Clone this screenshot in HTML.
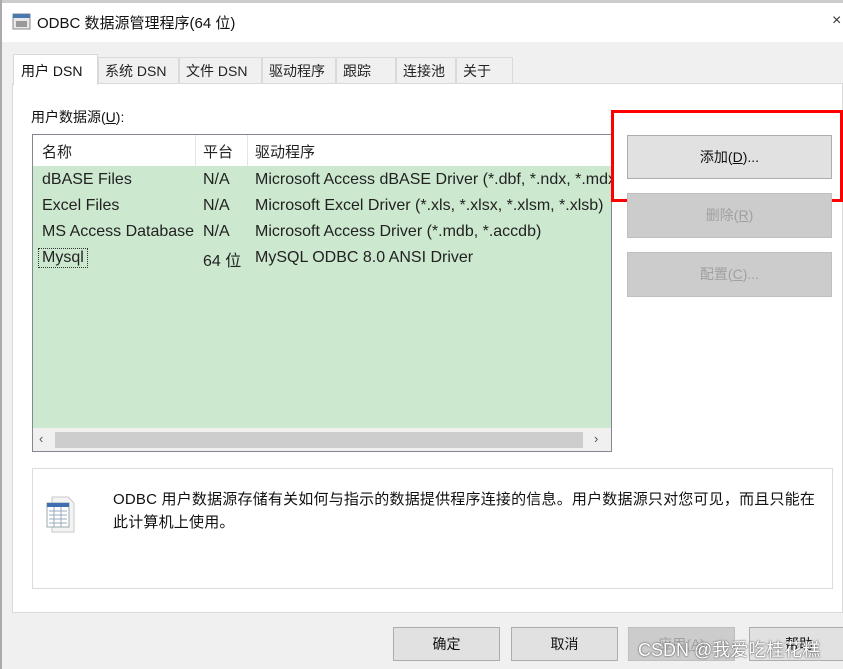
<!DOCTYPE html>
<html><head><meta charset="utf-8"><style>
*{box-sizing:border-box;margin:0;padding:0}
body{width:843px;height:669px;overflow:hidden;background:#f0f0f0;font-family:"Liberation Sans","Noto Sans CJK SC",sans-serif;font-size:14px;color:#111;position:relative}
.a{position:absolute}
.tab{position:absolute;top:57px;height:27px;background:#f0f0f0;border:1px solid #dadada;border-bottom:none;font-size:14px;line-height:26px;padding-left:6px;color:#222}
.btn{position:absolute;background:#e1e1e1;border:1px solid #adadad;text-align:center;font-size:14px}
.dis{background:#cccccc;border-color:#bfbfbf;color:#a0a0a0}
.row{position:absolute;left:9px;font-size:16px;color:#222;white-space:nowrap}
</style></head><body>
<div class="a" style="left:0;top:0;width:843px;height:42px;background:#fff"></div>
<div class="a" style="left:0;top:0;width:843px;height:3px;background:#ccc"></div>
<div class="a" style="left:0;top:0;width:2px;height:669px;background:#aaa"></div>
<svg class="a" style="left:12px;top:13px" width="20" height="18"><rect x="1" y="1" width="17" height="15" fill="#e8e8e8" stroke="#888"/><rect x="1" y="1" width="17" height="4" fill="#4a78b0"/><rect x="4" y="8" width="11" height="6" fill="#999"/></svg>
<div class="a" style="left:37px;top:12px;font-size:15px">ODBC 数据源管理程序(64 位)</div>
<div class="a" style="left:832px;top:12px;font-size:16px;color:#333">×</div>
<div class="tab" style="left:98px;width:81px">系统 DSN</div>
<div class="tab" style="left:179px;width:83px">文件 DSN</div>
<div class="tab" style="left:262px;width:74px">驱动程序</div>
<div class="tab" style="left:336px;width:60px">跟踪</div>
<div class="tab" style="left:396px;width:60px">连接池</div>
<div class="tab" style="left:456px;width:57px">关于</div>
<div class="a" style="left:12px;top:83px;width:831px;height:530px;background:#fff;border:1px solid #d9d9d9"></div>
<div class="a" style="left:13px;top:54px;width:85px;height:31px;background:#fff;border:1px solid #d9d9d9;border-bottom:none;padding:6px 0 0 7px;font-size:14px">用户 DSN</div>
<div class="a" style="left:31px;top:107px;font-size:14px">用户数据源(<u>U</u>):</div>
<div class="a" style="left:32px;top:134px;width:580px;height:318px;border:1px solid #828790;background:#cce8cf;overflow:hidden">
 <div class="a" style="left:0;top:0;width:580px;height:31px;background:#fff"></div>
 <div class="a" style="left:162px;top:0;width:1px;height:31px;background:#e5e5e5"></div>
 <div class="a" style="left:214px;top:0;width:1px;height:31px;background:#e5e5e5"></div>
 <div class="row" style="top:6px;font-size:15px">名称</div><div class="row" style="left:170px;top:6px;font-size:15px">平台</div><div class="row" style="left:222px;top:6px;font-size:15px">驱动程序</div>
 <div class="row" style="top:36px">dBASE Files</div><div class="row" style="left:170px;top:36px">N/A</div><div class="row" style="left:222px;top:36px">Microsoft Access dBASE Driver (*.dbf, *.ndx, *.mdx)</div>
 <div class="row" style="top:62px">Excel Files</div><div class="row" style="left:170px;top:62px">N/A</div><div class="row" style="left:222px;top:62px">Microsoft Excel Driver (*.xls, *.xlsx, *.xlsm, *.xlsb)</div>
 <div class="row" style="top:88px">MS Access Database</div><div class="row" style="left:170px;top:88px">N/A</div><div class="row" style="left:222px;top:88px">Microsoft Access Driver (*.mdb, *.accdb)</div>
 <div class="row" style="top:113px;left:5px;border:1px dotted #333;padding:0 3px">Mysql</div><div class="row" style="left:170px;top:112px">64 位</div><div class="row" style="left:222px;top:114px">MySQL ODBC 8.0 ANSI Driver</div>
 <div class="a" style="left:0;top:293px;width:580px;height:24px;background:#f0f0f0"></div>
 <div class="a" style="left:22px;top:297px;width:528px;height:16px;background:#cdcdcd"></div>
 <div class="a" style="left:6px;top:296px;font-size:13px;color:#555">‹</div>
 <div class="a" style="left:561px;top:296px;font-size:13px;color:#555">›</div>
</div>
<div class="btn" style="left:627px;top:135px;width:205px;height:44px;line-height:42px">添加(<u>D</u>)...</div>
<div class="a" style="left:611px;top:110px;width:232px;height:92px;border:3px solid #f00"></div>
<div class="btn dis" style="left:627px;top:193px;width:205px;height:45px;line-height:43px">删除(<u>R</u>)</div>
<div class="btn dis" style="left:627px;top:252px;width:205px;height:45px;line-height:43px">配置(<u>C</u>)...</div>
<div class="a" style="left:32px;top:468px;width:801px;height:121px;border:1px solid #dcdcdc;background:#fff"></div>
<svg class="a" style="left:44px;top:494px" width="32" height="40"><path d="M8 3h16l6 6v29H8z" fill="#f4f4f4" stroke="#c8c8c8"/><rect x="3" y="9" width="22" height="24" fill="#fff" stroke="#9aa"/><rect x="3" y="9" width="22" height="4" fill="#3f6fb0"/><g stroke="#9ab" stroke-width="1"><path d="M5 17h18M5 21h18M5 25h18M5 29h18M10 13v20M17 13v20"/></g></svg>
<div class="a" style="left:113px;top:488px;font-size:15px;letter-spacing:0.2px;line-height:23px;width:720px;white-space:nowrap">ODBC 用户数据源存储有关如何与指示的数据提供程序连接的信息。用户数据源只对您可见，而且只能在<br>此计算机上使用。</div>
<div class="btn" style="left:393px;top:627px;width:107px;height:34px;line-height:32px">确定</div>
<div class="btn" style="left:511px;top:627px;width:107px;height:34px;line-height:32px">取消</div>
<div class="btn dis" style="left:628px;top:627px;width:107px;height:34px;line-height:32px">应用(<u>A</u>)</div>
<div class="btn" style="left:749px;top:627px;width:100px;height:34px;line-height:32px">帮助</div>
<div class="a" style="left:638px;top:636px;font-size:18px;color:#fff;text-shadow:0 0 2px #666,0 0 1px #444">CSDN @我爱吃桂花糕</div>
</body></html>
